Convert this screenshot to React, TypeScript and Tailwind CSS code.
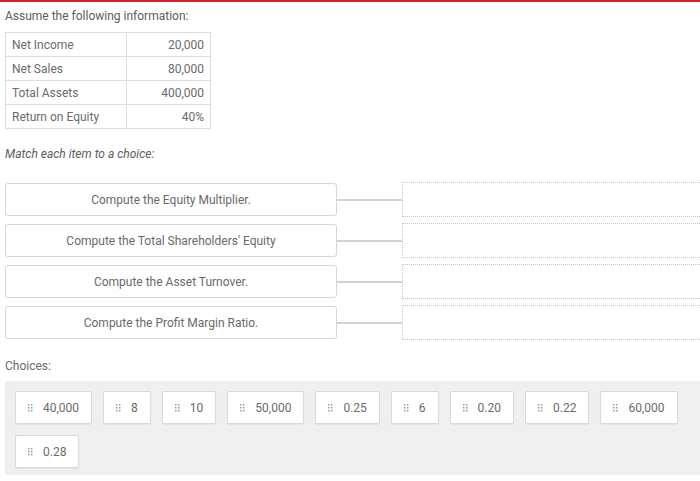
import React from "react";

const info = [
  ["Net Income", "20,000"],
  ["Net Sales", "80,000"],
  ["Total Assets", "400,000"],
  ["Return on Equity", "40%"],
];

const items = [
  "Compute the Equity Multiplier.",
  "Compute the Total Shareholders' Equity",
  "Compute the Asset Turnover.",
  "Compute the Profit Margin Ratio.",
];

const choices = ["40,000", "8", "10", "50,000", "0.25", "6", "0.20", "0.22", "60,000", "0.28"];

function Grip() {
  return (
    <svg width="5" height="8" viewBox="0 0 5 8" className="shrink-0">
      {[0, 3].map((x) =>
        [0, 3, 6].map((y) => <rect key={`${x}-${y}`} x={x} y={y} width="1.5" height="1.5" fill="#999" />)
      )}
    </svg>
  );
}

export default function App() {
  return (
    <div
      className="w-[700px] h-[481px] overflow-hidden bg-white text-[12px] font-normal text-[#6a6a6a]"
      style={{ fontFamily: "Roboto, 'Liberation Sans', sans-serif" }}
    >
      <div className="h-[2px] bg-[#d3202a]" />

      <div className="pl-[5px]">
        <p className="pt-[7px] leading-[14px] text-[#5c5c5c]">Assume the following information:</p>

        <table className="mt-[9px] border-collapse border border-[#ddd]">
          <tbody>
            {info.map(([label, value]) => (
              <tr key={label} className="h-[24px]">
                <td className="w-[121px] border border-[#ddd] px-[6px] leading-[14px]">{label}</td>
                <td className="w-[84px] border border-[#ddd] px-[6px] text-right leading-[14px]">{value}</td>
              </tr>
            ))}
          </tbody>
        </table>

        <p className="mt-[18px] italic leading-[14px] text-[#5c5c5c]">Match each item to a choice:</p>

        <div className="mt-[21px] flex flex-col gap-[6px]">
          {items.map((text) => (
            <div key={text} className="flex h-[35px] items-center">
              <div className="flex h-[33px] w-[332px] shrink-0 items-center justify-center rounded-[3px] border border-[#d6d6d6] bg-white">
                {text}
              </div>
              <div className="h-[2px] w-[65px] shrink-0 bg-[#d2d2d2]" />
              <div className="h-[35px] w-[320px] shrink-0 border border-dotted border-[#c4c4c4]" />
            </div>
          ))}
        </div>

        <p className="mt-[19px] leading-[14px]">Choices:</p>

        <div className="mt-[8px] flex h-[94px] flex-wrap content-start gap-[11px] bg-[#efefef] p-[10px]">
          {choices.map((c) => (
            <div
              key={c}
              className="flex h-[33px] items-center gap-[10px] rounded-[2px] border border-[#d9d9d9] bg-white pl-[12px] pr-[12px] shadow-[0_1px_1px_rgba(0,0,0,0.05)]"
            >
              <Grip />
              <span>{c}</span>
            </div>
          ))}
        </div>
      </div>
    </div>
  );
}
